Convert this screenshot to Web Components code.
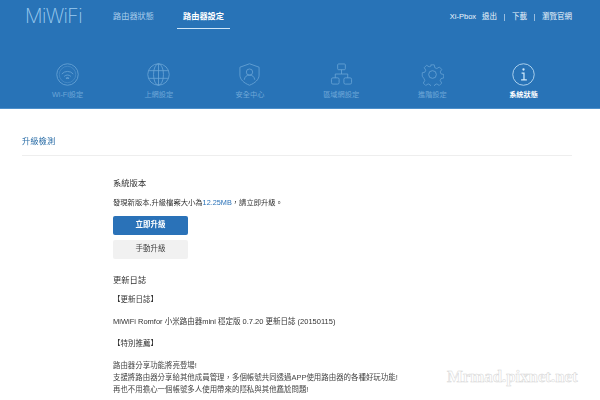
<!DOCTYPE html>
<html lang="zh-Hant"><head><meta charset="utf-8"><title>MiWiFi</title>
<style>
html,body{margin:0;padding:0;background:#fff;height:400px;overflow:hidden}
body{font-family:"Liberation Sans","Noto Sans CJK TC",sans-serif;position:relative}
</style></head><body>
<mi-header>
  <mi-tab label="Wi-Fi設定"><svg viewBox="0 0 24 24"><circle cx="12" cy="12" r="11.2"/><circle cx="12" cy="12" r="8.6" opacity=".5"/><path d="M6 11.5a8 8 0 0 1 12 0M8.5 14a5 5 0 0 1 7 0"/><path d="M10.5 16.2a2.2 2.2 0 0 1 3 0" stroke-width="1.4"/></svg></mi-tab>
  <mi-tab label="上網設定"><svg viewBox="0 0 24 24"><circle cx="12" cy="12" r="11.2"/><ellipse cx="12" cy="12" rx="5.2" ry="11.2"/><path d="M12 .8v22.4M1.6 8h20.8M1.6 16h20.8"/></svg></mi-tab>
  <mi-tab label="安全中心"><svg viewBox="0 0 24 24"><path d="M12 .8l10 3.6v8.2c0 4.6-4.2 8.4-10 10.600C6.200 21 2 17.200 2 12.600V4.400z"/><circle cx="12" cy="9.500" r="3.300"/><path d="M6.500 17.500c.6-3.400 2.800-5 5.500-5s4.900 1.600 5.500 5"/></svg></mi-tab>
  <mi-tab label="區域網設定"><svg viewBox="0 0 24 24"><rect x="8" y="1" width="8" height="6" rx="1"/><rect x="1.500" y="15.500" width="8" height="6.500" rx="1.500"/><rect x="14.500" y="15.500" width="8" height="6.500" rx="1.500"/><path d="M12 7v4.500M5.500 15.500v-4h13v4"/></svg></mi-tab>
  <mi-tab label="進階設定"><svg viewBox="0 0 24 24"><path d="M10 .8h4l.7 3.300 2.300 1 2.900-1.800 2.800 2.800-1.800 2.900 1 2.300 3.100.7v4l-3.100.7-1 2.300 1.800 2.900-2.800 2.800-2.900-1.800-2.300 1-.7 2.300h-4l-.7-2.300-2.300-1-2.900 1.800-2.800-2.800 1.800-2.900-1-2.300L.1 14v-4l3.100-.7 1-2.300L2.400 4.100l2.800-2.800 2.900 1.800 2.300-1z" transform="translate(1.200 1.200) scale(.9)"/><circle cx="12" cy="12" r="4"/></svg></mi-tab>
  <mi-tab label="系統狀態" active><svg viewBox="0 0 24 24"><circle cx="12" cy="12" r="11.2"/><path d="M10 10.500h2.500v7M9.500 17.500h6" stroke-width="1.300"/><circle cx="12" cy="6.800" r="1.200" fill="currentColor" stroke="none"/></svg></mi-tab>
</mi-header>
<mi-page></mi-page>
<mi-watermark>Mrmad.pixnet.net</mi-watermark>
<script>
function def(name, html, init){
  customElements.define(name, class extends HTMLElement{
    constructor(){super();const r=this.attachShadow({mode:'open'});r.innerHTML=html;if(init)init(this,r);}
  });
}
def('mi-header',`<style>
:host{display:block;height:109px;background:#2873b7;border-bottom:1px solid #4d8fca;box-sizing:border-box;color:#fff;font-size:7.500px}
.top{display:flex;align-items:flex-start;height:63px;padding:0 28px 0 25px}
.logo{font:200 19.500px/1 Inter,"Liberation Sans",sans-serif;color:#9ccbef;width:58px;margin-top:7px;letter-spacing:-.6px;white-space:nowrap}
nav{display:flex;margin-left:24px;gap:17px}
nav a{display:block;padding:11px 6px 0;height:17px;line-height:12px;color:#a8cdeb;font-size:8.200px;white-space:nowrap;width:41px}
nav a.on{color:#fff;font-weight:700;border-bottom:1.500px solid #cfe6f8}
.right{margin-left:auto;display:flex;gap:6px;padding-top:11px;line-height:12px;font-size:7.500px;color:#eef6fc;white-space:nowrap}
.right i{font-style:normal;margin:0 .5px;opacity:.85}
.tabs{display:grid;grid-template-columns:repeat(6,91.200px);padding-left:22px}
</style>
<div class="top"><div class="logo">MiWiFi</div>
<nav><a>路由器狀態</a><a class="on">路由器設定</a></nav>
<div class="right"><span>Xi-Pbox</span><span>退出</span><i>|</i><span>下載</span><i>|</i><span>瀏覽官網</span></div></div>
<div class="tabs"><slot></slot></div>`);
def('mi-tab',`<style>
:host{display:flex;flex-direction:column;align-items:center;color:#6ea7d8;font-size:7.200px;line-height:12px}
:host([active]){color:#fff;font-weight:700}
.i{width:23px;height:23px;color:inherit}
:host([active]) .i{color:#cfeafc}
::slotted(svg){width:23px;height:23px;fill:none;stroke:currentColor;stroke-width:.8;display:block}
.l{margin-top:3px;white-space:nowrap}
</style><div class="i"><slot></slot></div><div class="l"></div>`,(el,r)=>{
  r.querySelector('.l').textContent=el.getAttribute('label');
});
def('mi-button',`<style>
:host{display:block;width:75px;height:18.500px;line-height:18.500px;text-align:center;font-size:7.500px;border-radius:2px;background:#f1f1f1;color:#444;margin-bottom:5.500px}
:host([primary]){background:#2a72b8;color:#fff;font-weight:700}
</style><slot></slot>`);
def('mi-page',`<style>
:host{display:block;padding:0 28px 0 22px;color:#333;font-size:7.500px;line-height:12px;filter:blur(.25px)}
h2{margin:0;font:inherit;font-size:8.300px;color:#2d6fa8;padding:26px 0 8px;border-bottom:1.500px solid #eeeeee;height:12px}
.c{padding:21px 0 0 91px}
p{margin:0;white-space:nowrap}
b{font-weight:400;color:#2a72b8}
.sys{margin-bottom:8px;font-size:8.300px}
.up{margin-bottom:7px;font-size:7.300px}
.log{margin-top:15px;font-size:8.300px}
.g{margin-top:8px}.g2{margin-top:10px}
.lines{margin-top:10px;color:#444;font-size:7.450px}
</style>
<h2>升級檢測</h2>
<div class="c">
<p class="sys">系統版本</p>
<p class="up">發現新版本,升級檔案大小為<b>12.25MB</b>&#65292;請立即升級。</p>
<mi-button primary>立即升級</mi-button>
<mi-button>手動升級</mi-button>
<p class="log">更新日誌</p>
<p class="g">【更新日誌】</p>
<p class="g2">MiWiFi Romfor 小米路由器mini 穩定版 0.7.20 更新日誌 (20150115)</p>
<p class="g2">【特別推薦】</p>
<div class="lines"><p>路由器分享功能將亮登場!</p>
<p>支援將路由器分享給其他成員管理&#65292;多個帳號共同透過APP使用路由器的各種好玩功能!</p>
<p>再也不用擔心一個帳號多人使用帶來的隱私與其他尷尬問題!</p></div>
</div>`);
def('mi-watermark',`<style>
:host{position:absolute;left:447px;top:366px;font:700 16.800px/22px "Liberation Serif",serif;color:#fff;-webkit-text-stroke:.5px #d4d4d4;white-space:nowrap}
</style><slot></slot>`);
</script>
</body></html>
